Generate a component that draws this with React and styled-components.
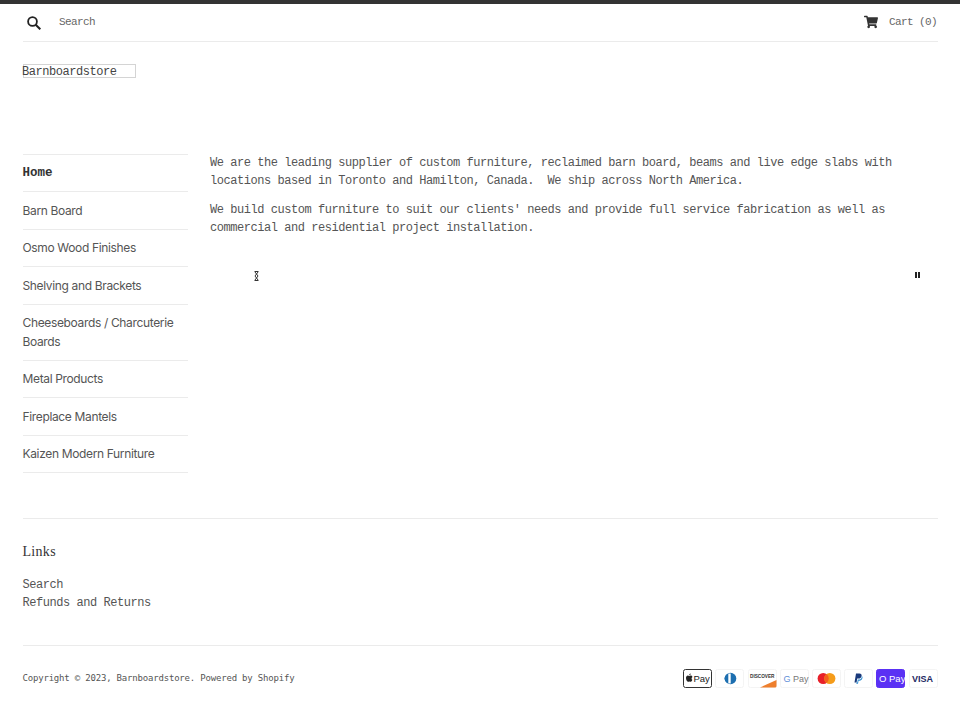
import styled, { createGlobalStyle } from "styled-components"
import { FaShoppingCart } from "react-icons/fa";

const Global = createGlobalStyle`
  html, body { margin: 0; padding: 0; background: #fff; }
  body {
    font-family: "Liberation Mono", monospace;
    color: #3d3d3d;
  }
`

const mono = `
  font-family: "Liberation Mono", monospace;
  font-size: 12px;
  letter-spacing: -0.45px;
  line-height: 18px;
`

const Page = styled.div`
  border-top: 4px solid #333;
  padding: 0 22.5px;
  width: 960px;
  height: 716px;
  box-sizing: border-box;
  overflow: hidden;
`

const Header = styled.header`
  display: flex;
  align-items: center;
  height: 37px;
  border-bottom: 1px solid #ebebeb;
`

const SearchBox = styled.div`
  display: flex;
  align-items: center;
  gap: 18px;
  padding-left: 4.5px;
  font-size: 11px;
  letter-spacing: -0.6px;
  color: #666;
  span { margin-bottom: 2px; }
`

const CartLink = styled.div`
  margin: 0 0.5px 2px auto;
  display: flex;
  align-items: center;
  gap: 10.5px;
  font-size: 11px;
  letter-spacing: -0.6px;
  color: #666;
  svg { color: #333; font-size: 14px; }
`

const Logo = styled.div`
  ${mono}
  margin-top: 22px;
  width: 113px;
  height: 14px;
  line-height: 14px;
  box-sizing: border-box;
  border: 1px solid #d4d4d4;
  white-space: nowrap;
  text-indent: -1.5px;
  color: #444;
`

const Columns = styled.div`
  display: flex;
  gap: 22px;
  margin-top: 75.5px;
`

const Sidebar = styled.nav`
  width: 165.5px;
  flex: none;
  border-top: 1px solid #ebebeb;
`

const NavItem = styled.div`
  border-bottom: 1px solid #ebebeb;
  padding: 9.5px 0 8.5px;
  font-family: Inter, "Noto Sans", sans-serif;
  font-size: 12px;
  letter-spacing: -0.35px;
  line-height: 18.5px;
  color: #555;
  ${p => p.$active && `
    font-family: "Liberation Mono", monospace;
    font-size: 12.5px;
    letter-spacing: 0;
    font-weight: 700;
    color: #333;
  `}
`

const Main = styled.main`
  flex: 1;
`

const Para = styled.p`
  ${mono}
  margin: 0 0 11px;
  color: #555;
  white-space: pre-wrap;
`

const Slider = styled.div`
  display: flex;
  justify-content: space-between;
  align-items: flex-start;
  height: 12px;
  margin-top: 34.6px;
  padding: 0 18px 0 44px;
`

const PauseIcon = styled.svg`
  margin-top: 1px;
`

const Footer = styled.footer`
  border-top: 1px solid #ebebeb;
  margin-top: 45px;
`

const FooterTitle = styled.h4`
  margin: 24px 0 15px;
  font-family: "Liberation Serif", serif;
  font-weight: 400;
  font-size: 14px;
  line-height: 18px;
  letter-spacing: 0.3px;
  color: #333;
`

const FooterLink = styled.div`
  ${mono}
  color: #555;
`

const BottomBar = styled.div`
  margin-top: 33px;
  border-top: 1px solid #ebebeb;
  display: flex;
  align-items: center;
  justify-content: space-between;
  padding-top: 22.5px;
`

const Copyright = styled.div`
  font-family: "DejaVu Sans Mono", monospace;
  font-size: 9px;
  letter-spacing: -0.19px;
  color: #555;
`

const Cards = styled.div`
  display: flex;
  gap: 3.2px;
`

const Card = styled.svg`
  width: 29px;
  height: 19px;
  display: block;
`

const CardFrame = ({ border = "#f4f4f4", fill = "#fff", children }) => (
  <Card viewBox="0 0 29 19">
    <rect x=".5" y=".5" width="28" height="18" rx="2" fill={fill} stroke={border} />
    {children}
  </Card>
)

const sans = "Liberation Sans, sans-serif"

const SearchIcon = () => (
  <svg width="14" height="14" viewBox="0 0 14 14" fill="none" stroke="#222" strokeWidth="1.8">
    <circle cx="5.5" cy="5.5" r="4.4" />
    <path d="M8.7 8.7l4.6 4.6" strokeWidth="2.1" />
  </svg>
)

const CloseMark = () => (
  <svg width="5" height="10" viewBox="0 0 5 10" stroke="#333" strokeWidth="1" fill="none">
    <path d="M.5 .5h4M.5 9.5h4M1 1l3 4-3 4M4 1L1 5l3 4" />
  </svg>
)

const PauseMark = () => (
  <PauseIcon width="5" height="6" viewBox="0 0 5 6" fill="#222">
    <rect width="2" height="6" />
    <rect x="3" width="2" height="6" />
  </PauseIcon>
)

const navItems = [
  "Barn Board",
  "Osmo Wood Finishes",
  "Shelving and Brackets",
  "Cheeseboards / Charcuterie Boards",
  "Metal Products",
  "Fireplace Mantels",
  "Kaizen Modern Furniture",
]

export default function App() {
  return (
    <Page>
      <Global />
      <Header>
        <SearchBox>
          <SearchIcon />
          <span>Search</span>
        </SearchBox>
        <CartLink>
          <FaShoppingCart />
          <span>Cart (0)</span>
        </CartLink>
      </Header>

      <Logo>Barnboardstore</Logo>

      <Columns>
        <Sidebar>
          <NavItem $active>Home</NavItem>
          {navItems.map(item => <NavItem key={item}>{item}</NavItem>)}
        </Sidebar>
        <Main>
          <Para>We are the leading supplier of custom furniture, reclaimed barn board, beams and live edge slabs with locations based in Toronto and Hamilton, Canada.  We ship across North America.</Para>
          <Para>We build custom furniture to suit our clients' needs and provide full service fabrication as well as commercial and residential project installation.</Para>
          <Slider>
            <CloseMark />
            <PauseMark />
          </Slider>
        </Main>
      </Columns>

      <Footer>
        <FooterTitle>Links</FooterTitle>
        <FooterLink>Search</FooterLink>
        <FooterLink>Refunds and Returns</FooterLink>
        <BottomBar>
          <Copyright>Copyright © 2023, Barnboardstore. Powered by Shopify</Copyright>
          <Cards>
            <CardFrame border="#333">
              <path d="M6.3 6.300c.5 0 1-.3 1.200-.8.2-.4.2-.8.2-1-.5 0-1 .3-1.200.7-.2.4-.3.7-.2 1.100zM7.700 6.500c-.7 0-1 .4-1.500.4s-.8-.4-1.400-.4C3.900 6.500 3 7.400 3 8.900c0 1.900 1.300 3.900 2.100 3.900.5 0 .7-.3 1.300-.3s.7.3 1.300.3c.7 0 1.300-1 1.700-2-.9-.4-1.300-2 .1-2.900-.4-.9-1.100-1.400-1.800-1.400z" fill="#222" />
              <text x="10.500" y="13" fontFamily={sans} fontSize="9.500" fill="#222">Pay</text>
            </CardFrame>
            <CardFrame>
              <circle cx="15.500" cy="9.500" r="5.800" fill="#1d6fb0" />
              <rect x="13.300" y="4.500" width="2.400" height="10" fill="#fff" />
              <path d="M12.500 5.200v8.600c-1.900-.8-3-2.400-3-4.300s1.100-3.500 3-4.300z" fill="#1d6fb0" />
            </CardFrame>
            <CardFrame>
              <path d="M12 18.500 28.500 11v6a1.500 1.500 0 0 1-1.500 1.500z" fill="#ee7f2d" />
              <text x="2" y="9" fontFamily={sans} fontSize="4.700" fontWeight="700" fill="#333">DISCOVER</text>
            </CardFrame>
            <CardFrame>
              <text x="3.500" y="12.800" fontFamily={sans} fontSize="9" fill="#777"><tspan fill="#5f8fd8">G</tspan> Pay</text>
            </CardFrame>
            <CardFrame>
              <circle cx="11.200" cy="9.500" r="5.600" fill="#e8202a" />
              <circle cx="17.800" cy="9.500" r="5.600" fill="#f59c1a" />
              <path d="M14.500 5a5.600 5.600 0 0 1 0 9 5.600 5.600 0 0 1 0-9z" fill="#f4601f" />
            </CardFrame>
            <CardFrame>
              <path d="M12 4.500h3.400c1.700 0 2.500 1 2.200 2.500-.3 1.700-1.500 2.600-3.100 2.600h-1.300l-.6 3.900h-2.100z" fill="#1a3a7c" />
              <path d="M17.800 7c.7.500.9 1.300.6 2.300-.4 1.600-1.500 2.400-3 2.400h-.9l-.5 3h-1.700l.2-1.200h.8l.5-3h1c1.500 0 2.600-.8 2.900-2.300z" fill="#2a8bd0" />
            </CardFrame>
            <CardFrame border="#5a31f4" fill="#5a31f4">
              <text x="3" y="13.200" fontFamily={sans} fontSize="9.500" fill="#fff">O Pay</text>
            </CardFrame>
            <CardFrame>
              <text x="3" y="12.800" fontFamily={sans} fontSize="9" fontWeight="700" fill="#1f2a63">VISA</text>
            </CardFrame>
          </Cards>
        </BottomBar>
      </Footer>
    </Page>
  )
}
